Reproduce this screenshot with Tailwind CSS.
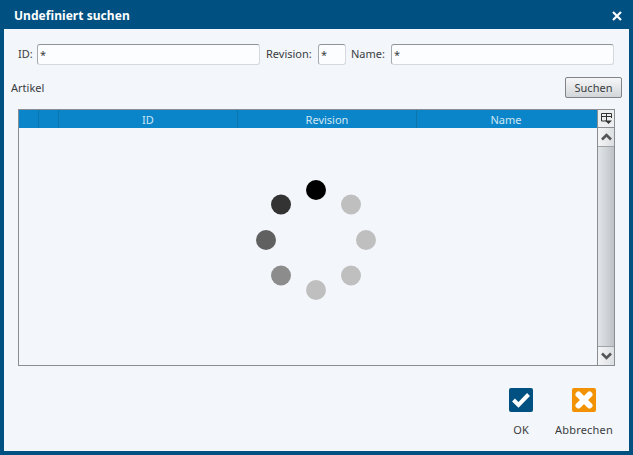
<!DOCTYPE html>
<html lang="de">
<head>
  <meta charset="UTF-8" />
  <title>Undefiniert suchen</title>
  <script src="https://cdn.jsdelivr.net/npm/@tailwindcss/browser@4"></script>
</head>
<body class="w-[633px] h-[455px] overflow-hidden bg-[#005082] font-['Noto_Sans',sans-serif] text-[11px] text-[#3a3d40]">
  <div class="h-[29px] pt-[3px] pl-[14px] pr-[10px] flex items-center justify-between">
    <h1 class="text-[12px] font-bold text-white tracking-[0.05px]">Undefiniert suchen</h1>
    <svg class="w-[12px] h-[12px]" viewBox="0 0 12 12"><path d="M2 2l8 8M10 2l-8 8" stroke="#fff" stroke-width="2.2" /></svg>
  </div>

  <div class="mx-[4px] h-[422px] bg-[#f3f6fb] flex flex-col">
    <!-- search row -->
    <div class="h-[21px] mt-[15px] ml-[14px] flex items-center">
      <span class="w-[19px]">ID:</span>
      <input value="*" class="w-[223px] h-[21px] px-[2px] bg-[#fbfdff] border border-[#d5d9de] border-t-[#8f9499] border-l-[#a5a9ae] rounded-[3px] text-[11px] outline-none" />
      <span class="ml-[6px] w-[52px]">Revision:</span>
      <input value="*" class="w-[28px] h-[21px] px-[2px] bg-[#fbfdff] border border-[#d5d9de] border-t-[#8f9499] border-l-[#a5a9ae] rounded-[3px] text-[11px] outline-none" />
      <span class="ml-[5px] w-[40px]">Name:</span>
      <input value="*" class="w-[223px] h-[21px] px-[2px] bg-[#fbfdff] border border-[#d5d9de] border-t-[#8f9499] border-l-[#a5a9ae] rounded-[3px] text-[11px] outline-none" />
    </div>

    <div class="h-[21px] mt-[12px] ml-[7px] mr-[7px] flex items-center justify-between">
      <span class="pt-[1px]">Artikel</span>
      <button class="w-[57px] h-[21px] pt-[1px] border border-[#808488] rounded-[2px] bg-gradient-to-b from-[#f6f7f8] to-[#d3d6d9] text-[11px] text-[#3a3d40]">Suchen</button>
    </div>

    <!-- table -->
    <div class="mt-[11px] ml-[14px] w-[597px] h-[257px] border border-[#8a8e93] flex">
      <div class="w-[578px] relative">
        <div class="h-[18px] bg-[#0a85c9] flex text-[#cfe6f4] text-center leading-[20px]">
          <div class="w-[20px] border-r border-[#0b75ae]"></div>
          <div class="w-[20px] border-r border-[#0b75ae]"></div>
          <div class="w-[179px] border-r border-[#0b75ae]">ID</div>
          <div class="w-[179px] border-r border-[#0b75ae]">Revision</div>
          <div class="w-[178px]">Name</div>
        </div>
        <svg class="absolute left-[237px] top-[70px] w-[120px] h-[120px]" viewBox="0 0 120 120">
          <circle cx="60" cy="10" r="10" fill="#000" />
          <circle cx="95" cy="24.500" r="10" fill="#bfbfbf" />
          <circle cx="110" cy="60" r="10" fill="#bfbfbf" />
          <circle cx="95" cy="95.500" r="10" fill="#bfbfbf" />
          <circle cx="60" cy="110" r="10" fill="#bfbfbf" />
          <circle cx="25" cy="95.500" r="10" fill="#8c8c8c" />
          <circle cx="10" cy="60" r="10" fill="#606060" />
          <circle cx="25" cy="24.500" r="10" fill="#333" />
        </svg>
      </div>
      <div class="w-[17px] flex flex-col border-l border-[#8a8e93]">
        <div class="h-[18px] bg-[#eceef0] flex items-center justify-center border-b border-[#8a8e93]">
          <svg class="w-[13px] h-[13px]" viewBox="0 0 13 13"><path d="M1.500 9V1.500h10V6M1.500 4.500h10M6.500 1.500V9H1.500" fill="none" stroke="#333" /><path d="M5 8.500h7l-3.500 3.500z" fill="#333" /></svg>
        </div>
        <div class="h-[19px] bg-gradient-to-r from-[#f4f5f6] to-[#dcdfe2] flex items-center justify-center border-b border-[#a0a4a8]">
          <svg class="w-[11px] h-[8px]" viewBox="0 0 11 8"><path d="M1 6.500l4.500-4.500 4.500 4.500" fill="none" stroke="#555" stroke-width="2.600" /></svg>
        </div>
        <div class="flex-1 bg-gradient-to-r from-[#e2e5e8] to-[#bfc3c7]"></div>
        <div class="h-[19px] bg-gradient-to-r from-[#f4f5f6] to-[#dcdfe2] flex items-center justify-center border-t border-[#a0a4a8]">
          <svg class="w-[11px] h-[8px]" viewBox="0 0 11 8"><path d="M1 1.500l4.500 4.500 4.500-4.500" fill="none" stroke="#555" stroke-width="2.600" /></svg>
        </div>
      </div>
    </div>

    <!-- actions -->
    <div class="mt-[22px] flex justify-end">
      <div class="w-[60px] mr-[3px] flex flex-col items-center">
        <svg class="w-[24px] h-[24px]" viewBox="0 0 24 24"><rect width="24" height="24" rx="2" fill="#005082" /><path d="M4.500 12l5 5 10-10.500" fill="none" stroke="#fff" stroke-width="4" /></svg>
        <span class="mt-[10px]">OK</span>
      </div>
      <div class="w-[60px] mr-[15px] flex flex-col items-center">
        <svg class="w-[24px] h-[24px]" viewBox="0 0 24 24"><rect width="24" height="24" rx="2" fill="#f39200" /><path d="M6.500 6.500l11 11M17.500 6.500l-11 11" stroke="#fff" stroke-width="6" stroke-linecap="round" /></svg>
        <span class="mt-[10px] whitespace-nowrap tracking-[0.2px]">Abbrechen</span>
      </div>
    </div>
  </div>
</body>
</html>
